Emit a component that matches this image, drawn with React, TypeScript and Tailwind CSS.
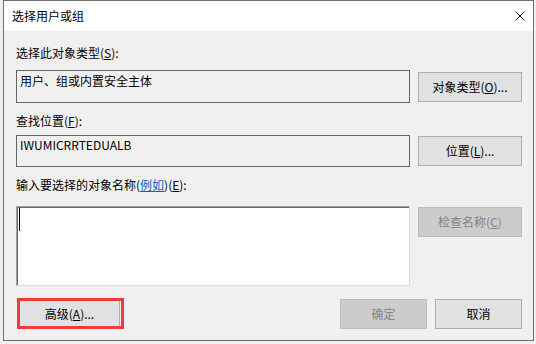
import React from "react";

const font = { fontFamily: '"Noto Sans CJK SC", "Microsoft YaHei", sans-serif' };

function Btn({ children, disabled, className = "" }: { children: React.ReactNode; disabled?: boolean; className?: string }) {
  return (
    <div
      className={
        "h-[30px] flex items-center justify-center text-[12px] leading-[16px] border " +
        (disabled ? "bg-[#cccccc] border-[#bfbfbf] text-[#838383] " : "bg-[#e1e1e1] border-[#adadad] text-black ") +
        className
      }
    >
      {children}
    </div>
  );
}

export default function App() {
  return (
    <div className="w-[536px] h-[344px] bg-[#f0f0f0] overflow-hidden" style={font}>
      <div className="ml-[3px] w-[531px] h-[341px] border border-[#6f6f6f] flex flex-col bg-[#f0f0f0]">
        <div className="h-[30px] bg-white flex items-center justify-between pl-[8px] pr-[8px]">
          <span className="text-[12px] leading-[16px] text-black">选择用户或组</span>
          <svg width="10" height="10" viewBox="0 0 10 10" className="block">
            <path d="M0.5 0.5 L9.5 9.5 M9.5 0.5 L0.5 9.5" stroke="#111" strokeWidth="1" />
          </svg>
        </div>
        <div className="flex-1 flex flex-col pl-[12px] pr-[11px] text-[12px] leading-[16px] text-black">
          <div className="mt-[14px] h-[16px]">
            选择此对象类型(<u>S</u>):
          </div>
          <div className="mt-[9px] flex gap-[8px] items-start">
            <div className="w-[394px] h-[33px] border border-[#646464] pl-[3px] pt-[2px]">用户、组或内置安全主体</div>
            <Btn className="w-[104px] mt-[2px]">
              对象类型(<u>O</u>)...
            </Btn>
          </div>
          <div className="mt-[10px] h-[16px]">
            查找位置(<u>F</u>):
          </div>
          <div className="mt-[6px] flex gap-[8px] items-start">
            <div className="w-[394px] h-[32px] border border-[#646464] pl-[3px] pt-[1px]">IWUMICRRTEDUALB</div>
            <Btn className="w-[104px] mt-[1px]">
              位置(<u>L</u>)...
            </Btn>
          </div>
          <div className="mt-[10px] h-[16px]">
            输入要选择的对象名称(<span className="text-[#0066cc] underline">例如</span>)(<u>E</u>):
          </div>
          <div className="mt-[13px] flex gap-[8px] items-start">
            <div className="w-[394px] h-[80px] bg-white border-t border-l border-[#a0a0a0] border-r border-b border-r-[#dadada] border-b-[#dadada] shadow-[inset_1px_1px_0_#696969] pl-[2px] pt-[1px]">
              <div className="w-[1px] h-[23px] bg-black" />
            </div>
            <Btn disabled className="w-[104px] mt-[1px]">
              检查名称(<u>C</u>)
            </Btn>
          </div>
          <div className="mt-[12px] flex items-start">
            <div className="ml-[1px] w-[107px] h-[31px] border-[3px] border-[#ef3b3b] flex">
              <div className="w-[100px] h-full bg-[#e1e1e1] border-r border-[#adadad] flex items-center justify-center">
                高级(<u>A</u>)...
              </div>
            </div>
            <div className="flex-1" />
            <Btn disabled className="w-[87px] mt-[1px]">
              确定
            </Btn>
            <Btn className="w-[87px] mt-[1px] ml-[8px]">取消</Btn>
          </div>
        </div>
      </div>
    </div>
  );
}
